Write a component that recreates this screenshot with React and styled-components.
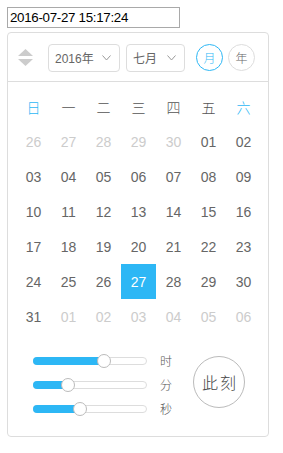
import React from 'react'
import styled, { createGlobalStyle } from 'styled-components'

const Global = createGlobalStyle`
  body {
    margin: 0;
    font-family: "Liberation Sans", Arial, "Noto Sans CJK SC", sans-serif;
    background: #fff;
  }
`

const Page = styled.div`
  padding: 7px;
  display: flex;
  flex-direction: column;
  align-items: flex-start;
  gap: 4px;
`

const Input = styled.input`
  box-sizing: border-box;
  width: 173px;
  height: 21px;
  border: 1px solid #a9a9a9;
  padding: 1px 2px;
  font-family: "Liberation Sans", Arial, sans-serif;
  font-size: 13.33px;
  letter-spacing: -0.3px;
  color: #000;
  outline: none;
`

const Panel = styled.div`
  box-sizing: border-box;
  width: 262px;
  height: 405px;
  border: 1px solid #ddd;
  border-radius: 4px;
  display: flex;
  flex-direction: column;
`

const Header = styled.div`
  height: 49px;
  border-bottom: 1px solid #ddd;
  display: flex;
  align-items: center;
  padding-left: 10px;
  padding-top: 1px;
  box-sizing: border-box;
`

const Arrows = styled.svg`
  width: 15px;
  height: 17px;
  margin-right: 15px;
`

const Select = styled.div`
  box-sizing: border-box;
  width: ${p => p.$w}px;
  height: 28px;
  border: 1px solid #ddd;
  border-radius: 4px;
  display: flex;
  align-items: center;
  justify-content: space-between;
  padding: 0 8px 0 6px;
  margin-right: ${p => p.$mr}px;
  font-family: "Liberation Sans", Arial, "Noto Sans CJK SC", sans-serif;
  font-size: 12px;
  color: #666;
`

const Chevron = styled.svg`
  width: 9px;
  height: 6px;
`

const Circle = styled.div`
  box-sizing: border-box;
  width: 27px;
  height: 27px;
  border-radius: 50%;
  border: 1px solid ${p => (p.$active ? '#2db7f5' : '#ddd')};
  color: ${p => (p.$active ? '#2db7f5' : '#666')};
  display: flex;
  align-items: center;
  justify-content: center;
  font-family: "Noto Sans CJK SC", sans-serif;
  font-weight: 300;
  font-size: 12px;
  margin-right: 5px;
`

const Grid = styled.div`
  display: grid;
  grid-template-columns: repeat(7, 35px);
  grid-auto-rows: 35px;
  padding: 7px 0 0 8px;
`

const Week = styled.div`
  display: flex;
  align-items: center;
  justify-content: center;
  font-family: "Noto Sans CJK SC", sans-serif;
  font-weight: 300;
  font-size: 14px;
  color: ${p => (p.$weekend ? '#2db7f5' : '#555')};
`

const Day = styled.div`
  display: flex;
  align-items: center;
  justify-content: center;
  font-size: 14px;
  color: ${p => (p.$selected ? '#fff' : p.$muted ? '#ccc' : '#666')};
  background: ${p => (p.$selected ? '#2db7f5' : 'transparent')};
`

const TimeSection = styled.div`
  flex: 1;
  display: flex;
  align-items: center;
  padding-left: 25px;
`

const Sliders = styled.div`
  display: grid;
  grid-template-columns: 114px auto;
  grid-auto-rows: 24px;
  column-gap: 13px;
  align-items: center;
`

const Track = styled.div`
  position: relative;
  box-sizing: border-box;
  height: 8px;
  border: 1px solid #ddd;
  border-radius: 4px;
  background: #fff;
`

const Fill = styled.div`
  position: absolute;
  left: -1px;
  top: -1px;
  bottom: -1px;
  background: #2db7f5;
  border-radius: 4px 0 0 4px;
`

const Thumb = styled.div`
  position: absolute;
  top: 50%;
  width: 14px;
  height: 14px;
  margin: -7px 0 0 -7px;
  box-sizing: border-box;
  border-radius: 50%;
  background: #fff;
  border: 1px solid #bbb;
`

const Label = styled.span`
  font-family: "Noto Sans CJK SC", sans-serif;
  font-weight: 300;
  font-size: 12px;
  color: #555;
  line-height: 1;
`

const NowButton = styled.div`
  box-sizing: border-box;
  width: 52px;
  height: 52px;
  margin: 0 0 6px 21px;
  padding-left: 2px;
  border-radius: 50%;
  border: 1px solid #bbb;
  display: flex;
  align-items: center;
  justify-content: center;
  font-family: "Noto Sans CJK SC", sans-serif;
  font-weight: 300;
  font-size: 16px;
  letter-spacing: 2px;
  color: #444;
`

const weekdays = ['日', '一', '二', '三', '四', '五', '六']
const pad = n => String(n).padStart(2, '0')

const days = [
  ...[26, 27, 28, 29, 30].map(d => ({ d, muted: true })),
  ...Array.from({ length: 31 }, (_, i) => ({ d: i + 1 })),
  ...[1, 2, 3, 4, 5, 6].map(d => ({ d, muted: true })),
]

const times = [
  { label: '时', value: 15, max: 23 },
  { label: '分', value: 17, max: 59 },
  { label: '秒', value: 24, max: 59 },
]

function Slider({ value, max }) {
  const pos = 6 + (112 - 12) * (value / max)
  return (
    <Track>
      <Fill style={{ width: pos + 1 }} />
      <Thumb style={{ left: pos - 1 }} />
    </Track>
  )
}

export default function App() {
  return (
    <>
      <Global />
      <Page>
        <Input readOnly value="2016-07-27 15:17:24" />
        <Panel>
          <Header>
            <Arrows viewBox="0 0 15 17">
              <polygon points="7.5,0 15,7 0,7" fill="#ccc" />
              <polygon points="0,10 15,10 7.5,17" fill="#ccc" />
            </Arrows>
            <Select $w={72} $mr={6}>
              <span>2016年</span>
              <Chevron viewBox="0 0 9 6">
                <polyline points="0.5,0.5 4.5,5 8.5,0.5" fill="none" stroke="#999" strokeWidth="1" />
              </Chevron>
            </Select>
            <Select $w={59} $mr={11}>
              <span>七月</span>
              <Chevron viewBox="0 0 9 6">
                <polyline points="0.5,0.5 4.5,5 8.5,0.5" fill="none" stroke="#999" strokeWidth="1" />
              </Chevron>
            </Select>
            <Circle $active>月</Circle>
            <Circle>年</Circle>
          </Header>
          <Grid>
            {weekdays.map((w, i) => (
              <Week key={w} $weekend={i === 0 || i === 6}>{w}</Week>
            ))}
            {days.map((x, i) => (
              <Day key={i} $muted={x.muted} $selected={!x.muted && x.d === 27}>
                {pad(x.d)}
              </Day>
            ))}
          </Grid>
          <TimeSection>
            <Sliders>
              {times.map(t => (
                <React.Fragment key={t.label}>
                  <Slider value={t.value} max={t.max} />
                  <Label>{t.label}</Label>
                </React.Fragment>
              ))}
            </Sliders>
            <NowButton>此刻</NowButton>
          </TimeSection>
        </Panel>
      </Page>
    </>
  )
}
